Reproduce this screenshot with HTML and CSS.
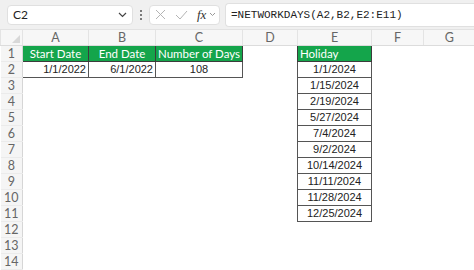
FILE: index.html
```html
<!DOCTYPE html>
<html lang="en">
<head>
    <meta charset="UTF-8">
    <title>NETWORKDAYS</title>
    <link rel="stylesheet" href="styles.css">
</head>
<body>
    <div class="formula-bar">
        <div class="name-box">
            <span>C2</span>
            <svg class="chev" width="9" height="6" viewBox="0 0 9 6"><path d="M1 1l3.5 3.5L8 1" fill="none" stroke="#444" stroke-width="1.2"/></svg>
        </div>
        <div class="dots"><i></i><i></i><i></i></div>
        <div class="func-box">
            <svg width="11" height="11" viewBox="0 0 11 11"><path d="M1 1l9 9M10 1l-9 9" stroke="#b4b4b4" stroke-width="1"/></svg>
            <svg width="13" height="10" viewBox="0 0 13 10"><path d="M1 5l4 4 7-8" fill="none" stroke="#b4b4b4" stroke-width="1"/></svg>
            <span class="fx">fx</span>
            <svg width="7" height="5" viewBox="0 0 7 5"><path d="M1 1l2.5 2.5L6 1" fill="none" stroke="#999" stroke-width="1"/></svg>
        </div>
        <div class="formula">=NETWORKDAYS(A2,B2,E2:E11)</div>
    </div>

    <table class="sheet">
        <colgroup>
            <col class="c-row"><col class="c-a"><col class="c-b"><col class="c-c"><col class="c-d"><col class="c-e"><col class="c-f"><col class="c-g">
        </colgroup>
        <tr class="col-heads">
            <th class="corner"><span class="tri"></span></th>
            <th>A</th><th>B</th><th>C</th><th>D</th><th>E</th><th>F</th><th>G</th>
        </tr>
        <tr>
            <th class="rh">1</th>
            <td class="head">Start Date</td>
            <td class="head">End Date</td>
            <td class="head">Number of Days</td>
            <td></td>
            <td class="head left">Holiday</td>
            <td></td><td></td>
        </tr>
        <tr>
            <th class="rh">2</th>
            <td class="box num">1/1/2022</td>
            <td class="box num">6/1/2022</td>
            <td class="box mid">108</td>
            <td></td>
            <td class="box mid">1/1/2024</td>
            <td></td><td></td>
        </tr>
        <tr><th class="rh">3</th><td></td><td></td><td></td><td></td><td class="box mid">1/15/2024</td><td></td><td></td></tr>
        <tr><th class="rh">4</th><td></td><td></td><td></td><td></td><td class="box mid">2/19/2024</td><td></td><td></td></tr>
        <tr><th class="rh">5</th><td></td><td></td><td></td><td></td><td class="box mid">5/27/2024</td><td></td><td></td></tr>
        <tr><th class="rh">6</th><td></td><td></td><td></td><td></td><td class="box mid">7/4/2024</td><td></td><td></td></tr>
        <tr><th class="rh">7</th><td></td><td></td><td></td><td></td><td class="box mid">9/2/2024</td><td></td><td></td></tr>
        <tr><th class="rh">8</th><td></td><td></td><td></td><td></td><td class="box mid">10/14/2024</td><td></td><td></td></tr>
        <tr><th class="rh">9</th><td></td><td></td><td></td><td></td><td class="box mid">11/11/2024</td><td></td><td></td></tr>
        <tr><th class="rh">10</th><td></td><td></td><td></td><td></td><td class="box mid">11/28/2024</td><td></td><td></td></tr>
        <tr><th class="rh">11</th><td></td><td></td><td></td><td></td><td class="box mid">12/25/2024</td><td></td><td></td></tr>
        <tr><th class="rh">12</th><td></td><td></td><td></td><td></td><td></td><td></td><td></td></tr>
        <tr><th class="rh">13</th><td></td><td></td><td></td><td></td><td></td><td></td><td></td></tr>
        <tr><th class="rh">14</th><td></td><td></td><td></td><td></td><td></td><td></td><td></td></tr>
    </table>
</body>
</html>
```

FILE: styles.css
```css
body {
    margin: 0;
    width: 474px;
    height: 270px;
    overflow: hidden;
    background: #fff;
    font-family: Lato, "Noto Sans", sans-serif;
}
.formula-bar {
    display: flex;
    align-items: center;
    height: 30px;
    padding-left: 7px;
    background: #f0f0f0;
    box-sizing: border-box;
    border-bottom: 1px solid #e2e2e2;
}
.name-box {
    display: flex;
    align-items: center;
    justify-content: space-between;
    width: 126px;
    height: 20px;
    box-sizing: border-box;
    padding: 0 5px 0 5px;
    background: #fff;
    border: 1px solid #e0e0e0;
    border-radius: 4px;
    font-size: 12px;
    color: #222;
}
.dots {
    display: flex;
    flex-direction: column;
    gap: 2px;
    width: 16px;
    align-items: center;
}
.dots i {
    width: 2px;
    height: 2px;
    background: #555;
    border-radius: 1px;
}
.func-box {
    display: flex;
    align-items: center;
    gap: 9px;
    width: 71px;
    height: 20px;
    box-sizing: border-box;
    padding-left: 5px;
    background: #fff;
    border: 1px solid #e0e0e0;
    border-radius: 4px;
}
.fx {
    font-family: "Liberation Serif", serif;
    font-style: italic;
    font-size: 13px;
    color: #333;
    margin-right: -6px;
}
.formula {
    flex: 1;
    margin-left: 5px;
    height: 22px;
    line-height: 22px;
    padding-left: 5px;
    background: #fff;
    border: 1px solid #e0e0e0;
    border-right: none;
    border-radius: 4px 0 0 4px;
    font-family: "Liberation Mono", monospace;
    font-size: 11px;
    color: #222;
}
.sheet {
    border-collapse: collapse;
    table-layout: fixed;
    width: 474px;
}
.c-row { width: 22px; }
.c-a { width: 66px; }
.c-b { width: 67px; }
.c-c { width: 87px; }
.c-d { width: 55px; }
.c-e { width: 74px; }
.c-f { width: 52px; }
.c-g { width: 51px; }
.sheet td, .sheet th {
    padding: 0 2px;
    height: 15px;
    line-height: 15px;
    white-space: nowrap;
    overflow: hidden;
}
.col-heads th {
    background: #f7f7f7;
    color: #666;
    font-weight: normal;
    font-size: 12.5px;
    border-left: 1px solid #e4e4e4;
    border-bottom: 1px solid #dcdcdc;
}
.corner {
    position: relative;
}
.tri {
    position: absolute;
    right: 2px;
    bottom: 2px;
    width: 0;
    height: 0;
    border-left: 8px solid transparent;
    border-bottom: 8px solid #d8d8d8;
}
.rh {
    background: #f5f5f5;
    color: #666;
    font-weight: normal;
    font-size: 12.5px;
    text-align: center;
    border-right: 1px solid #d6d6d6;
    border-bottom: 1px solid #ebebeb;
}
.head {
    background: #14a54b;
    color: #fff;
    font-size: 11.5px;
    text-align: center;
    border: 1px solid #3c3c3c;
}
.head.left {
    text-align: left;
}
.box {
    border: 1px solid #555;
    font-family: "Liberation Sans", Arial, sans-serif;
    font-size: 11px;
    color: #222;
}
.num {
    text-align: right;
}
.mid {
    text-align: center;
}
```
